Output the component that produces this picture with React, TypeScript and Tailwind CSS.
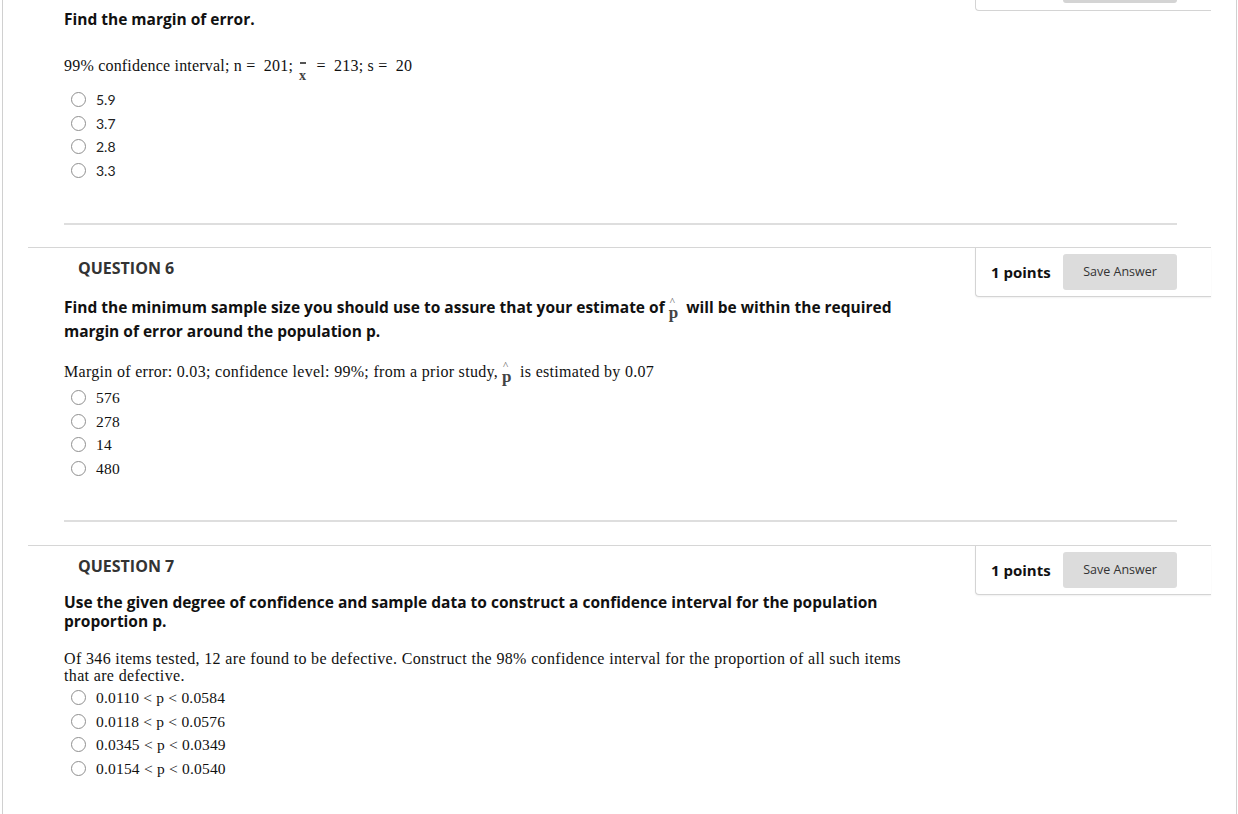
import React from "react";

const sans = { fontFamily: '"Open Sans", "Liberation Sans", sans-serif' };

function Radio({ label, serif }: { label: React.ReactNode; serif?: boolean }) {
  return (
    <div className="flex items-center h-[23.5px]">
      <span className="ml-[7px] w-[15px] h-[15px] rounded-full border border-[#8f8f8f] bg-white shrink-0" />
      <span
        className={serif ? "ml-[10px] text-[15.5px] tracking-[0.2px] text-[#111] font-['Liberation_Serif',serif]" : "ml-[10px] text-[14px] text-[#222] font-['Lato','Open_Sans',sans-serif]"}
      >
        {label}
      </span>
    </div>
  );
}

function PHat() {
  return (
    <span className="relative inline-block align-[-5px] mx-[4px] font-['Liberation_Serif',serif] text-[17px] leading-[8px] font-bold text-[#444]">
      p
      <span className="absolute left-[1px] -top-[13px] text-[11px] leading-none font-normal text-[#555]">^</span>
    </span>
  );
}

function XBar() {
  return (
    <span className="relative inline-block align-[-9px] mx-[6px] font-['Liberation_Serif',serif] text-[14px] leading-[6px] font-bold text-[#444]">
      x
      <span className="absolute left-[1px] -top-[11px] w-[6px] h-[2px] bg-[#555]" />
    </span>
  );
}

function PointsBox() {
  return (
    <div className="w-[236px] h-[49px] border-l border-b border-[#d4d4d4] rounded-bl-[4px] shadow-[0_1px_2px_rgba(0,0,0,0.06)] flex items-center shrink-0 bg-white">
      <span className="pl-[15px] text-[15px] font-bold text-[#111]" style={sans}>1 points</span>
      <button className="ml-auto mr-[34px] w-[114px] h-[36px] rounded-[3px] bg-[#dcdcdc] text-[12.5px] text-[#333]" style={sans}>
        Save Answer
      </button>
    </div>
  );
}

function QuestionHeader({ n }: { n: number }) {
  return (
    <div className="flex items-start border-t border-[#d6d6d6]">
      <div className="pl-[50px] pt-[8px] text-[16px] leading-[24px] font-bold text-[#333] flex-1" style={sans}>
        QUESTION {n}
      </div>
      <PointsBox />
    </div>
  );
}

export default function App() {
  return (
    <div className="w-[1238px] h-[814px] bg-white overflow-hidden">
      <div className="ml-[2px] w-[1235px] h-full border-l border-r border-[#d0d0d0] px-[25px]">
        {/* question 5, scrolled */}
        <div>
          <div className="float-right w-[236px] h-[11px] border-l border-b border-[#d4d4d4] rounded-bl-[4px] flex justify-end">
            <div className="mr-[34px] w-[114px] h-[3px] rounded-b-[3px] bg-[#d4d4d4]" />
          </div>
          <div className="pl-[36px] pr-[34px]">
            <div className="pt-[7px] text-[15.5px] font-bold leading-[24px] text-[#111]" style={sans}>
              Find the margin of error.
            </div>
            <div className="mt-[23px] text-[16px] tracking-[0.2px] leading-[24px] text-[#111] font-['Liberation_Serif',serif]">
              99% confidence interval; n = &nbsp;201;
              <XBar />
              &nbsp;= &nbsp;213; s = &nbsp;20
            </div>
            <div className="mt-[9px]">
              <Radio label="5.9" />
              <Radio label="3.7" />
              <Radio label="2.8" />
              <Radio label="3.3" />
            </div>
            <div className="mt-[41px] h-[2px] bg-[#dedede]" />
          </div>
        </div>

        {/* question 6 */}
        <div className="mt-[22px]">
          <QuestionHeader n={6} />
          <div className="pl-[36px] pr-[34px]">
            <div className="-mt-[2px] w-[860px] text-[15.5px] font-bold leading-[24px] text-[#111]" style={sans}>
              Find the minimum sample size you should use to assure that your estimate of
              <PHat /> will be within the required margin of error around the population p.
            </div>
            <div className="mt-[17px] text-[16px] tracking-[0.3px] leading-[24px] text-[#111] font-['Liberation_Serif',serif]">
              Margin of error: 0.03; confidence level: 99%; from a prior study,
              <PHat /> is estimated by 0.07
            </div>
            <div className="mt-[2px]">
              <Radio serif label="576" />
              <Radio serif label="278" />
              <Radio serif label="14" />
              <Radio serif label="480" />
            </div>
            <div className="mt-[40px] h-[2px] bg-[#dedede]" />
          </div>
        </div>

        {/* question 7 */}
        <div className="mt-[23px]">
          <QuestionHeader n={7} />
          <div className="pl-[36px] pr-[34px]">
            <div className="-mt-[2px] w-[860px] text-[15.5px] font-bold leading-[19px] text-[#111]" style={sans}>
              Use the given degree of confidence and sample data to construct a confidence interval for the population proportion p.
            </div>
            <div className="mt-[19px] w-[850px] text-[16px] tracking-[0.35px] leading-[17px] text-[#111] font-['Liberation_Serif',serif]">
              Of 346 items tested, 12 are found to be defective. Construct the 98% confidence interval for the proportion of all such items that are defective.
            </div>
            <div className="mt-[2px]">
              <Radio serif label="0.0110 < p < 0.0584" />
              <Radio serif label="0.0118 < p < 0.0576" />
              <Radio serif label="0.0345 < p < 0.0349" />
              <Radio serif label="0.0154 < p < 0.0540" />
            </div>
          </div>
        </div>
      </div>
    </div>
  );
}
